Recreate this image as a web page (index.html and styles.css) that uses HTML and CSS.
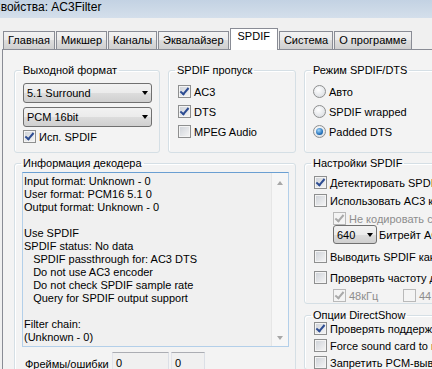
FILE: index.html
```html
<!DOCTYPE html>
<html lang="ru">
<head>
    <meta charset="UTF-8">
    <title>Свойства: AC3Filter</title>
    <link rel="stylesheet" href="styles.css">
</head>
<body>
    <div class="window">
        <div class="titlebar">Свойства: AC3Filter</div>

        <div class="client">
            <div class="tabs">
                <div class="tab">Главная</div>
                <div class="tab">Микшер</div>
                <div class="tab">Каналы</div>
                <div class="tab">Эквалайзер</div>
                <div class="tab active">SPDIF</div>
                <div class="tab">Система</div>
                <div class="tab">О программе</div>
            </div>

            <div class="page">
                <!-- Output format -->
                <fieldset class="group">
                    <legend>Выходной формат</legend>
                    <div class="gb-body g-output">
                        <div class="combo">5.1 Surround</div>
                        <div class="combo">PCM 16bit</div>
                        <label class="check"><span class="cb on"></span>Исп. SPDIF</label>
                    </div>
                </fieldset>

                <!-- Passthrough -->
                <fieldset class="group">
                    <legend>SPDIF пропуск</legend>
                    <div class="gb-body g-list">
                        <label class="check"><span class="cb on"></span>AC3</label>
                        <label class="check"><span class="cb on"></span>DTS</label>
                        <label class="check"><span class="cb"></span>MPEG Audio</label>
                    </div>
                </fieldset>

                <!-- DTS mode -->
                <fieldset class="group">
                    <legend>Режим SPDIF/DTS</legend>
                    <div class="gb-body g-list">
                        <label class="check"><span class="rb"></span>Авто</label>
                        <label class="check"><span class="rb"></span>SPDIF wrapped</label>
                        <label class="check"><span class="rb on"></span>Padded DTS</label>
                    </div>
                </fieldset>

                <!-- Decoder info -->
                <fieldset class="group g-info">
                    <legend>Информация декодера</legend>
                    <div class="gb-body info-body">
                        <div class="log">
                            <div class="log-text">Input format: Unknown - 0
User format: PCM16 5.1 0
Output format: Unknown - 0

Use SPDIF
SPDIF status: No data
   SPDIF passthrough for: AC3 DTS
   Do not use AC3 encoder
   Do not check SPDIF sample rate
   Query for SPDIF output support

Filter chain:
(Unknown - 0)</div>
                            <div class="vscroll">
                                <span class="arrow up"></span>
                                <span class="arrow down"></span>
                            </div>
                        </div>
                        <div class="frames">
                            <span class="frames-label">Фреймы/ошибки</span>
                            <span class="edit wide">0</span>
                            <span class="edit">0</span>
                        </div>
                    </div>
                </fieldset>

                <div class="right-col">
                    <!-- SPDIF options -->
                    <fieldset class="group g-options">
                        <legend>Настройки SPDIF</legend>
                        <div class="gb-body opts-body">
                            <label class="check r1"><span class="cb on"></span>Детектировать SPDIF</label>
                            <label class="check r2"><span class="cb"></span>Использовать AC3 кодер</label>
                            <label class="check r3 ind dis"><span class="cb on"></span>Не кодировать стерео PCM</label>
                            <div class="bitrate ind">
                                <div class="combo small">640</div>
                                <span>Битрейт AC3 кодера</span>
                            </div>
                            <label class="check r5"><span class="cb"></span>Выводить SPDIF как PCM</label>
                            <label class="check r6"><span class="cb"></span>Проверять частоту дискретизации</label>
                            <div class="rates ind dis">
                                <label class="check rate"><span class="cb on"></span>48кГц</label>
                                <label class="check"><span class="cb"></span>44.1кГц</label>
                            </div>
                        </div>
                    </fieldset>

                    <!-- DirectShow -->
                    <fieldset class="group g-dshow">
                        <legend>Опции DirectShow</legend>
                        <div class="gb-body g-dshow-body">
                            <label class="check"><span class="cb on"></span>Проверять поддержку формата</label>
                            <label class="check"><span class="cb"></span>Force sound card to reinit</label>
                            <label class="check"><span class="cb"></span>Запретить PCM-вывод</label>
                        </div>
                    </fieldset>
                </div>
            </div>
        </div>
    </div>
</body>
</html>
```

FILE: styles.css
```css
/* styles.css */
html, body {
    margin: 0;
    height: 100%;
    overflow: hidden;
    background: #f0f0f0;
}

body {
    font-family: 'Liberation Sans', Arial, sans-serif;
    font-size: 11px;
    color: #000;
}

.window {
    width: 480px;
}

.titlebar {
    height: 18px;
    line-height: 15px;
    font-size: 12px;
    text-indent: -8px;
    white-space: nowrap;
    overflow: hidden;
    background: linear-gradient(#c3d2e3, #d4dfeb);
}

.client {
    padding: 10px 0 0 2px;
}

/* Tabs */
.tabs {
    display: flex;
    align-items: flex-end;
    height: 21px;
    padding-left: 1px;
}

.tab {
    height: 18px;
    box-sizing: border-box;
    padding: 0 4px;
    line-height: 17px;
    border: 1px solid #898c95;
    border-bottom: none;
    margin-right: 1px;
    background: linear-gradient(#f2f2f2, #ebebeb 50%, #dddddd 50%, #cfcfcf);
    white-space: nowrap;
}

.tab.active {
    position: relative;
    z-index: 1;
    height: 22px;
    margin-bottom: -1px;
    line-height: 15px;
    padding: 0 7px;
    background: #fff;
}

/* Tab page */
.page {
    display: grid;
    grid-template-columns: 146px 128px 160px;
    grid-template-rows: 89px 240px;
    column-gap: 8px;
    row-gap: 4px;
    padding: 14px 0 0 11px;
    border: 1px solid #898c95;
    border-bottom: none;
    background: #f3f3f3;
}

.group {
    margin: 0;
    padding: 0;
    min-width: 0;
    border: 1px solid #d5dfe5;
    border-radius: 3px;
    box-shadow: inset 1px 1px #fff;
}

.group legend {
    margin-left: 6px;
    padding: 0 2px;
    line-height: 13px;
    white-space: nowrap;
}

.g-output {
    padding: 6px 7px 0 8px;
    display: flex;
    flex-direction: column;
    gap: 4px;
}

.g-output .check {
    margin-top: -1px;
}

.g-list {
    padding: 8px 0 0 8px;
    display: flex;
    flex-direction: column;
    gap: 7px;
}

.group:nth-child(2) .g-list {
    padding-left: 9px;
}

/* Checkboxes and radios */
.check {
    display: flex;
    align-items: center;
    height: 13px;
    white-space: nowrap;
}

.cb {
    position: relative;
    flex: none;
    width: 13px;
    height: 13px;
    box-sizing: border-box;
    margin-right: 3px;
    border: 1px solid #8e8f8f;
    background: linear-gradient(135deg, #cdd1d7, #f6f6f6);
    box-shadow: inset 0 0 0 1px #f4f4f4;
}

.cb.on::after {
    content: "";
    position: absolute;
    left: 3px;
    top: 0;
    width: 3px;
    height: 7px;
    border: solid #2d4c92;
    border-width: 0 2px 2px 0;
    transform: rotate(40deg);
}

.rb {
    flex: none;
    display: grid;
    place-items: center;
    width: 13px;
    height: 13px;
    box-sizing: border-box;
    margin-right: 3px;
    border: 1px solid #8e8f8f;
    border-radius: 50%;
    background: radial-gradient(circle at 40% 35%, #fff, #d3d7dc);
}

.rb.on::after {
    content: "";
    width: 7px;
    height: 7px;
    border-radius: 50%;
    background: radial-gradient(circle at 40% 35%, #a6d8fa, #1f6db8 65%, #16457a);
}

.dis {
    color: #8d8d8d;
}

.dis .cb {
    border-color: #b9b9b9;
    background: #f4f4f4;
}

.dis .cb.on::after {
    border-color: #a9a9a9;
}

/* Combo boxes */
.combo {
    display: flex;
    align-items: center;
    height: 20px;
    box-sizing: border-box;
    padding-left: 3px;
    border: 1px solid #707070;
    border-radius: 3px;
    background: linear-gradient(#f2f2f2, #ebebeb 50%, #dddddd 50%, #cfcfcf);
    white-space: nowrap;
}

.combo::after {
    content: "";
    margin-left: auto;
    margin-right: 3px;
    border-left: 3.5px solid transparent;
    border-right: 3.5px solid transparent;
    border-top: 4px solid #000;
}

.combo.small {
    width: 44px;
    height: 19px;
    flex: none;
    margin-right: 2px;
}

/* Decoder info */
.g-info {
    grid-column: 1 / 3;
}

.info-body {
    padding: 2px 6px 0 7px;
}

.log {
    display: flex;
    height: 175px;
    box-sizing: border-box;
    border: 1px solid #b3cfe9;
    border-top-color: #6a9fd2;
    background: #f0f0f0;
}

.log-text {
    flex: 1;
    padding: 2px 0 0 1px;
    line-height: 13px;
    white-space: pre;
    overflow: hidden;
}

.vscroll {
    width: 16px;
    display: flex;
    flex-direction: column;
    justify-content: space-between;
    align-items: center;
    padding: 8px 0 6px;
    border-left: 1px solid #e6e6e6;
    background: #f6f6f6;
}

.arrow {
    border-left: 3.5px solid transparent;
    border-right: 3.5px solid transparent;
}

.arrow.up {
    border-bottom: 4px solid #a7a7a7;
}

.arrow.down {
    border-top: 4px solid #a7a7a7;
}

.frames {
    display: flex;
    align-items: center;
    margin-top: 5px;
    padding-left: 3px;
}

.frames-label {
    width: 87px;
    padding-top: 3px;
}

.edit {
    width: 34px;
    height: 20px;
    box-sizing: border-box;
    padding: 4px 0 0 3px;
    border: 1px solid;
    border-color: #abadb3 #dbdfe6 #e3e9ef #e2e3ea;
    background: #f0f0f0;
}

.edit.wide {
    width: 57px;
    margin-right: 2px;
}

/* Right column */
.right-col {
    display: flex;
    flex-direction: column;
    gap: 5px;
}

.g-options {
    height: 147px;
    box-sizing: border-box;
}

.opts-body {
    padding: 6px 0 0 9px;
    display: flex;
    flex-direction: column;
}

.ind {
    margin-left: 19px;
}

.r2, .r3 { margin-top: 5px; }
.r5 { margin-top: 6px; }
.r6 { margin-top: 8px; }

.bitrate {
    display: flex;
    align-items: center;
    white-space: nowrap;
}

.rates {
    display: flex;
    margin-top: 5px;
}

.rate {
    width: 70px;
}

.g-dshow-body {
    padding-left: 9px;
    display: flex;
    flex-direction: column;
    gap: 4px;
}
```
